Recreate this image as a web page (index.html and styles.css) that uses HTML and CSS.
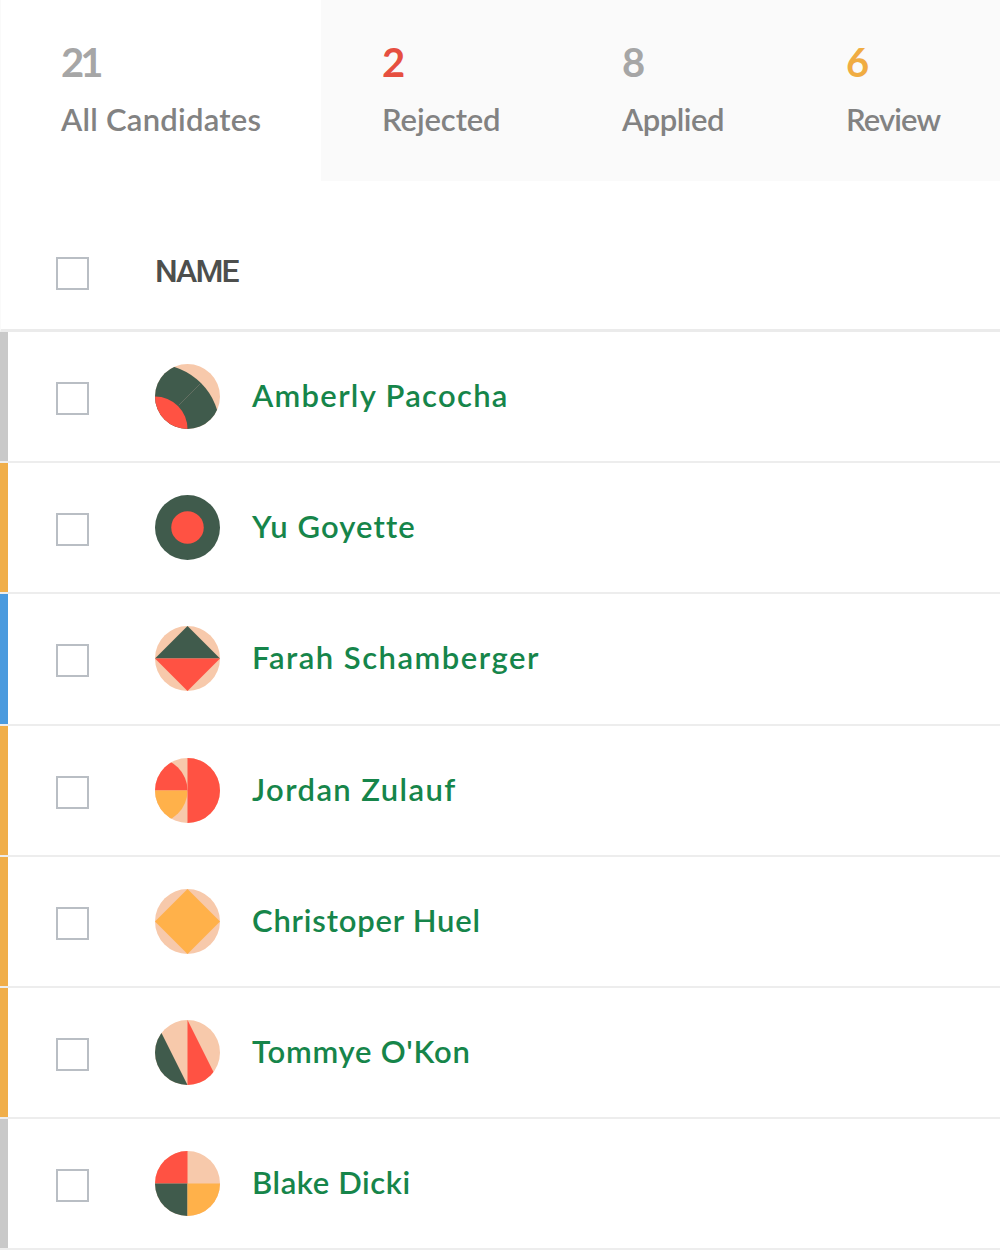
FILE: index.html
```
<!DOCTYPE html>
<html lang="en">
<head>
  <meta charset="UTF-8" />
  <title>Candidates</title>
  <link rel="stylesheet" href="styles.css">
</head>
<body>
  <nav class="tabs" aria-label="Candidate status">
    <a class="tab tab-all active"><span class="count">21</span><span class="label">All Candidates</span></a>
    <a class="tab tab-rejected"><span class="count">2</span><span class="label">Rejected</span></a>
    <a class="tab tab-applied"><span class="count">8</span><span class="label">Applied</span></a>
    <a class="tab tab-review"><span class="count">6</span><span class="label">Review</span></a>
  </nav>

  <main class="list">
    <div class="list-head">
      <span class="checkbox" role="checkbox" aria-checked="false"></span>
      <span class="heading">NAME</span>
    </div>

    <div class="row gray">
      <span class="checkbox" role="checkbox" aria-checked="false"></span>
      <svg class="avatar" viewBox="0 0 64 64" aria-hidden="true">
        <path class="peach" d="M0 0h64v64H0z"/>
        <circle class="dark" cx="0" cy="64" r="64"/>
        <circle class="red" cx="0" cy="64" r="32"/>
        <path class="seam" d="M23.5 40.5L44.5 19.5"/>
      </svg>
      <a class="name amberly">Amberly Pacocha</a>
    </div>

    <div class="row orange">
      <span class="checkbox" role="checkbox" aria-checked="false"></span>
      <svg class="avatar" viewBox="0 0 64 64" aria-hidden="true">
        <path class="dark" d="M0 0h64v64H0z"/>
        <circle class="red" cx="32" cy="32" r="16"/>
      </svg>
      <a class="name yu">Yu Goyette</a>
    </div>

    <div class="row blue">
      <span class="checkbox" role="checkbox" aria-checked="false"></span>
      <svg class="avatar" viewBox="0 0 64 64" aria-hidden="true">
        <path class="peach" d="M0 0h64v64H0z"/>
        <path class="dark" d="M32 0l32 32H0z"/>
        <path class="red" d="M0 32h64L32 64z"/>
      </svg>
      <a class="name farah">Farah Schamberger</a>
    </div>

    <div class="row orange">
      <span class="checkbox" role="checkbox" aria-checked="false"></span>
      <svg class="avatar" viewBox="0 0 64 64" aria-hidden="true">
        <path class="peach" d="M0 0h64v64H0z"/>
        <path class="red" d="M0 0a32 32 0 0 1 32 32H0z"/>
        <path class="yellow" d="M0 32h32A32 32 0 0 1 0 64z"/>
        <path class="red" d="M32 0h32v64H32z"/>
      </svg>
      <a class="name jordan">Jordan Zulauf</a>
    </div>

    <div class="row orange">
      <span class="checkbox" role="checkbox" aria-checked="false"></span>
      <svg class="avatar" viewBox="0 0 64 64" aria-hidden="true">
        <path class="peach" d="M0 0h64v64H0z"/>
        <path class="yellow" d="M32 0l32 32-32 32L0 32z"/>
      </svg>
      <a class="name christoper">Christoper Huel</a>
    </div>

    <div class="row orange">
      <span class="checkbox" role="checkbox" aria-checked="false"></span>
      <svg class="avatar" viewBox="0 0 64 64" aria-hidden="true">
        <path class="peach" d="M0 0h64v64H0z"/>
        <path class="dark" d="M0 0l32 64H0z"/>
        <path class="red" d="M32 0l32 64H32z"/>
      </svg>
      <a class="name tommye">Tommye O'Kon</a>
    </div>

    <div class="row gray">
      <span class="checkbox" role="checkbox" aria-checked="false"></span>
      <svg class="avatar" viewBox="0 0 64 64" aria-hidden="true">
        <path class="peach" d="M0 0h64v64H0z"/>
        <path class="red" d="M0 0h32v32H0z"/>
        <path class="dark" d="M0 32h32v32H0z"/>
        <path class="yellow" d="M32 32h32v32H32z"/>
      </svg>
      <a class="name blake">Blake Dicki</a>
    </div>
  </main>
</body>
</html>
```

FILE: styles.css
```
*, *::before, *::after {
  box-sizing: border-box;
}
body {
  margin: 0;
  width: 1000px;
  height: 1250px;
  overflow: hidden;
  font-family: Lato, "Open Sans", sans-serif;
  font-weight: 600;
  background: #fff;
}

.tabs {
  display: flex;
  height: 181px;
  background: #fafafa;
}
.tab {
  display: flex;
  flex: none;
  flex-direction: column;
  padding: 38px 0 0 61px;
  color: #a6a6a6;
  white-space: nowrap;
}
.tab.active {
  background: #fff;
  border-left: 1px solid #fafafa;
  padding-left: 60px;
}
.tab-all { width: 321px; }
.tab-rejected { width: 240px; }
.tab-applied { width: 224px; }
.tab-review { width: 215px; }
.count {
  font-size: 40px;
  line-height: 48px;
  font-weight: 700;
  letter-spacing: -4px;
}
.label {
  margin-top: 13px;
  font-size: 31px;
  line-height: 40px;
  color: #828282;
}
.tab-rejected .count { color: #e64f40; }
.tab-review .count { color: #f0ac42; }
.tab-all .label { letter-spacing: 0.25px; }
.tab-rejected .label { letter-spacing: -0.1px; }
.tab-applied .label { letter-spacing: -0.5px; }
.tab-review .label { letter-spacing: -0.9px; }

.list-head {
  display: flex;
  height: 151px;
  padding: 76px 0 0 55px;
  border-bottom: 3px solid #ebebeb;
  border-left: 1px solid #fafafa;
}
.checkbox {
  flex: none;
  width: 33px;
  height: 33px;
  border: 2px solid #b9bec4;
}
.heading {
  margin: -6px 0 0 66px;
  font-family: Roboto, sans-serif;
  font-size: 32px;
  line-height: 40px;
  font-weight: 500;
  letter-spacing: -1.9px;
  color: #4d4f4d;
}

.row {
  display: flex;
  align-items: center;
  height: 131.2px;
  padding-left: 48px;
  border-bottom: 2px solid #ededed;
}
.row::before {
  content: "";
  width: 8px;
  margin-left: -48px;
  margin-right: 48px;
  align-self: stretch;
}
.gray::before { background: #c9c9c9; }
.orange::before { background: #f0ae49; }
.blue::before { background: #4a9ade; }
.row .checkbox {
  margin-top: 4px;
}
.avatar {
  flex: none;
  width: 65px;
  height: 65px;
  margin-left: 66px;
  border-radius: 50%;
}
.peach { fill: #f7c9ab; }
.dark { fill: #405b4c; }
.red { fill: #ff5243; }
.yellow { fill: #ffb14a; }
.seam { stroke: #74796b; stroke-width: 0.7; }

.name {
  margin: -3px 0 0 32px;
  font-size: 31px;
  line-height: 40px;
  color: #16854a;
  white-space: nowrap;
}
.amberly { letter-spacing: 1.3px; }
.yu { letter-spacing: 1.1px; }
.farah { letter-spacing: 1.5px; }
.jordan { letter-spacing: 1.4px; }
.christoper { letter-spacing: 0.8px; }
.tommye { letter-spacing: 0.75px; }
.blake { letter-spacing: 0.6px; }
```
